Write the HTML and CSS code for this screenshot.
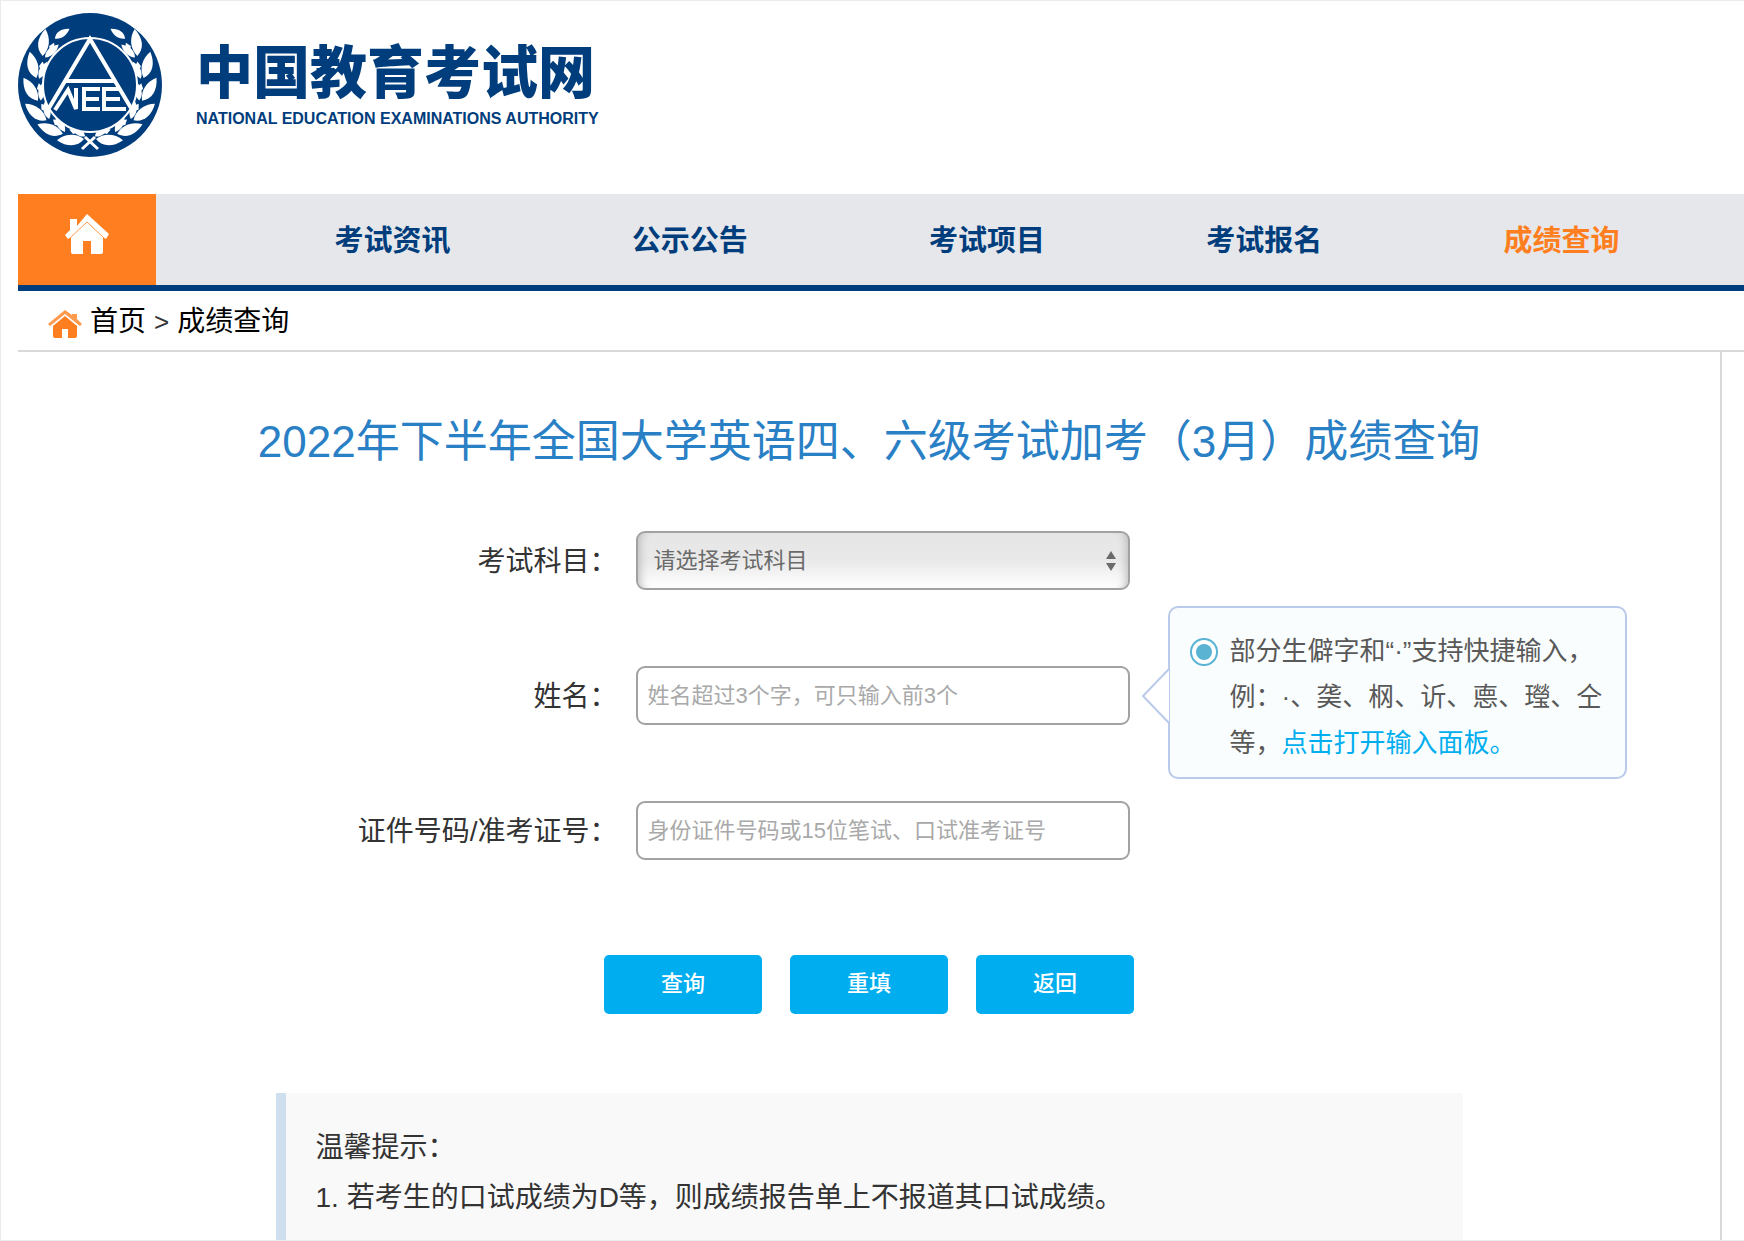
FILE: index.html
```html
<!DOCTYPE html>
<html lang="zh-CN">
<head>
<meta charset="utf-8">
<meta name="viewport" content="width=device-width, initial-scale=1">
<title>成绩查询 - 中国教育考试网</title>
<link rel="stylesheet" href="styles.css">
</head>
<body>
<div class="page">
  <header class="masthead">
    <svg class="seal" viewBox="0 0 144 144" aria-hidden="true">
      <defs>
        <path id="leaf" d="M0 2C-8-4-9-14-2-25C5-17 6-6 0 2Z"/>
        <g id="sprig">
          <use href="#leaf" transform="rotate(-16)"/>
          <use href="#leaf" transform="translate(4 1) rotate(24) scale(.65 .7)"/>
          <path d="M2-10l3-5 2 3-3 5Z"/>
        </g>
        <g id="branch">
          <use href="#sprig" transform="translate(64 126) rotate(-72)"/>
          <use href="#sprig" transform="translate(43 120) rotate(-49)"/>
          <use href="#sprig" transform="translate(27 106) rotate(-32)"/>
          <use href="#sprig" transform="translate(19 86) rotate(-12)"/>
          <use href="#sprig" transform="translate(18 63) rotate(6)"/>
          <use href="#sprig" transform="translate(25 41) rotate(26)"/>
          <use href="#leaf" transform="translate(38 25) rotate(60) scale(.65)"/>
        </g>
      </defs>
      <circle class="seal-disc" cx="72" cy="72" r="72"/>
      <g fill="#fff">
        <use href="#branch"/>
        <use href="#branch" transform="translate(144 0) scale(-1 1)"/>
      </g>
      <g class="seal-lines">
        <circle class="seal-disc" cx="72" cy="72" r="47"/>
        <path stroke-width="4" d="M31 95L72 26L113 95M46 68H98"/>
        <path stroke-width="4" d="M37 97L50 77L58 96V75M82 76H66V96H82M66 86H81M103 76H86V96H108M86 86H102"/>
        <path stroke-width="3" d="M67 124L80 136M77 124L64 136"/>
      </g>
    </svg>
    <div class="brand">
      <p class="brand-name">中国教育考试网</p>
      <p class="brand-sub">NATIONAL EDUCATION EXAMINATIONS AUTHORITY</p>
    </div>
  </header>

  <nav class="nav" aria-label="主导航">
    <a class="nav-home" href="#" aria-label="首页">
      <svg viewBox="0 0 44 40" aria-hidden="true">
        <path fill="#fff" d="M5 5h7v7L22 0l22 20-3 5-3-2v15q0 2-2 2H26V27h-8v13H8q-2 0-2-2V23l-3 2-3-4 5-5Z"/>
        <path class="roof-line" d="M5 24L22 8L39 24"/>
      </svg>
    </a>
    <ul class="nav-list">
      <li><a href="#">考试资讯</a></li>
      <li><a href="#">公示公告</a></li>
      <li><a href="#">考试项目</a></li>
      <li><a href="#">考试报名</a></li>
      <li><a class="active" href="#" aria-current="page">成绩查询</a></li>
    </ul>
  </nav>

  <nav class="crumbs" aria-label="当前位置">
    <svg viewBox="0 0 34 28" aria-hidden="true">
      <path fill="#ff9a4d" d="M17 0l7 5V4h5v5l5 5-2 2L17 4 2 16l-2-2Z"/>
      <path fill="#ff7f20" d="M17 6l12 10v10q0 2-2 2h-7v-9h-6v9H7q-2 0-2-2V16Z"/>
    </svg>
    <a href="#">首页</a>
    <span class="sep">&gt;</span>
    <span>成绩查询</span>
  </nav>

  <main class="content">
    <h1>2022年下半年全国大学英语四、六级考试加考（3月）成绩查询</h1>

    <form class="query">
      <div class="fields">
        <label for="subject">考试科目：</label>
        <div class="select-box">
          <select id="subject">
            <option>请选择考试科目</option>
          </select>
          <svg class="arrows" viewBox="0 0 10 20" aria-hidden="true"><path d="M5 0l5 8H0ZM5 20l5-8H0Z"/></svg>
        </div>
        <div></div>

        <label for="name">姓名：</label>
        <input id="name" type="text" placeholder="姓名超过3个字，可只输入前3个">
        <div class="hint-anchor">
          <div class="hint">
            <svg class="hint-arrow" viewBox="0 0 29 56" aria-hidden="true"><path d="M28 1L2 28L28 55"/></svg>
            <svg class="hint-dot" viewBox="0 0 28 28" aria-hidden="true"><circle class="ring" cx="14" cy="14" r="13"/><circle class="dot" cx="14" cy="14" r="8"/></svg>
            <p>部分生僻字和“·”支持快捷输入，例：·、䶮、㭎、䜣、㥁、㼆、仝等，<a href="#">点击打开输入面板。</a></p>
          </div>
        </div>

        <label for="idno">证件号码/准考证号：</label>
        <input id="idno" type="text" placeholder="身份证件号码或15位笔试、口试准考证号">
        <div></div>
      </div>

      <div class="actions">
        <button type="submit">查询</button>
        <button type="reset">重填</button>
        <button type="button">返回</button>
      </div>
    </form>

    <section class="notice">
      <p>温馨提示：</p>
      <p>1. 若考生的口试成绩为D等，则成绩报告单上不报道其口试成绩。</p>
    </section>
  </main>
</div>
</body>
</html>
```
FILE: styles.css
```css
* {
  box-sizing: border-box;
}

body {
  margin: 0;
  background: #fff;
  color: #333;
  font: 28px/50px "Liberation Sans", "Noto Sans CJK SC", sans-serif;
  text-spacing-trim: space-all;
}

p,
h1,
ul {
  margin: 0;
  padding: 0;
}

a {
  color: inherit;
  text-decoration: none;
}

svg {
  display: block;
}

.page {
  display: flex;
  flex-direction: column;
  min-height: 100vh;
  padding-left: 17px;
  border: 1px solid #ebebeb;
  border-right-width: 0;
}

/* Masthead */
.masthead {
  display: flex;
  align-items: flex-start;
  gap: 34px;
  height: 193px;
  padding-top: 12px;
  color: #003d7c;
}

.seal {
  width: 144px;
  height: 144px;
}

.seal-disc {
  fill: #003d7c;
}

.seal-lines {
  fill: none;
  stroke: #fff;
  stroke-width: 2;
}

.brand {
  padding-top: 28px;
}

.brand-name {
  font-size: 57px;
  font-weight: 900;
  line-height: 64px;
}

.brand-sub {
  font-size: 16px;
  font-weight: 700;
  line-height: 28px;
}

/* Main navigation */
.nav {
  display: flex;
  height: 97px;
  border-bottom: 6px solid #003d7c;
  background: #e6e7eb;
}

.nav-home {
  display: flex;
  justify-content: center;
  flex: none;
  width: 138px;
  padding-top: 20px;
  background: #ff7f20;
}

.nav-home svg {
  width: 44px;
  height: 40px;
}

.roof-line {
  fill: none;
  stroke: #ff9a4d;
  stroke-width: 1;
}

.nav-list {
  display: grid;
  flex: 1;
  grid-template-columns: 297fr 297fr 297fr 257fr 337fr;
  align-items: center;
  padding: 2px 14px 0 88px;
  color: #003d7c;
  font-size: 29px;
  font-weight: 700;
  list-style: none;
  text-align: center;
}

.nav-list .active {
  color: #ff7f20;
}

/* Breadcrumb */
.crumbs {
  display: flex;
  align-items: center;
  gap: 8px;
  height: 61px;
  padding: 2px 0 0 30px;
  border-bottom: 2px solid #d9d9d9;
  color: #000;
}

.crumbs svg {
  width: 34px;
  height: 28px;
  margin-top: 4px;
}

.sep {
  color: #333;
  font-size: 26px;
}

/* Content */
.content {
  flex: 1;
  margin-right: 22px;
  padding-top: 58px;
  border-right: 2px solid #d9d9d9;
}

h1 {
  color: #2a80c5;
  font-size: 44px;
  font-weight: 400;
  line-height: 64px;
  text-align: center;
}

.fields {
  display: grid;
  grid-template-columns: 1fr 494px 1fr;
  align-items: center;
  gap: 76px 18px;
  padding: 57px 0 0 27px;
}

.fields label {
  padding-top: 2px;
  text-align: right;
}

.fields input,
.fields select {
  display: block;
  width: 494px;
  height: 59px;
  padding: 0 10px;
  border: 2px solid #a2a2a2;
  border-radius: 9px;
  background: #fff;
  font: inherit;
  font-size: 22px;
}

.fields input::placeholder {
  color: #a9a9a9;
  opacity: 1;
}

.fields select {
  appearance: none;
  padding: 0 16px;
  background: linear-gradient(#e6e6e6, #e9e9e9 50%, #fff);
  box-shadow: inset 10px 0 8px -8px #bbb, inset -10px 0 8px -8px #bbb;
  color: #6a6a6a;
}

.select-box {
  position: relative;
}

.arrows {
  position: absolute;
  top: 20px;
  right: 14px;
  width: 10px;
  height: 20px;
  fill: #6a6a6a;
  pointer-events: none;
}

.hint-anchor {
  position: relative;
  align-self: start;
}

.hint {
  position: absolute;
  top: -60px;
  left: 20px;
  display: flex;
  gap: 12px;
  width: 459px;
  height: 173px;
  padding: 20px 22px 0 20px;
  border: 2px solid #b9caea;
  border-radius: 10px;
  background: #f9fdfe;
  color: #595959;
  font-size: 26px;
  line-height: 46px;
}

.hint a {
  color: #00aeef;
}

.hint-arrow {
  position: absolute;
  top: 60px;
  left: -29px;
  width: 29px;
  height: 56px;
  fill: #fff;
  stroke: #b9caea;
  stroke-width: 2;
}

.hint-dot {
  flex: none;
  width: 28px;
  height: 28px;
  margin-top: 10px;
}

.hint-dot .ring {
  fill: #fff;
  stroke: #5ab3d3;
  stroke-width: 2;
}

.hint-dot .dot {
  fill: #5ab3d3;
}

.actions {
  display: flex;
  justify-content: center;
  gap: 28px;
  padding-top: 95px;
}

.actions button {
  width: 158px;
  height: 59px;
  padding: 0 0 2px;
  border: 0;
  border-radius: 5px;
  background: #00aeef;
  color: #fff;
  font: inherit;
  font-size: 22px;
  font-weight: 500;
}

.notice {
  max-width: 1187px;
  min-height: 147px;
  margin: 79px auto 0;
  padding: 30px 30px 0;
  border-left: 10px solid #cfdfed;
  background: #f9f9f9;
}
```
